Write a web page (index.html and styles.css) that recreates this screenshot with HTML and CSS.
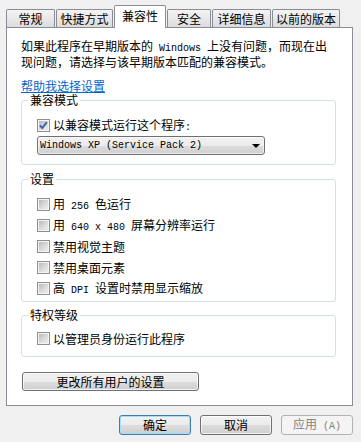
FILE: index.html
```html
<!DOCTYPE html>
<html>
<head>
  <meta charset="utf-8">
  <title>属性</title>
  <link rel="stylesheet" href="styles.css">
</head>
<body>
  <div class="dialog">
    <div class="tabs">
      <div class="tab t1">常规</div>
      <div class="tab t2">快捷方式</div>
      <div class="tab t3 active">兼容性</div>
      <div class="tab t4">安全</div>
      <div class="tab t5">详细信息</div>
      <div class="tab t6">以前的版本</div>
    </div>

    <div class="panel">
      <p class="intro">如果此程序在早期版本的<span class="mono"> Windows </span>上没有问题，而现在出<br>现问题，请选择与该早期版本匹配的兼容模式。</p>
      <a class="help" href="#">帮助我选择设置</a>

      <fieldset class="group g1">
        <legend>兼容模式</legend>
        <div class="body">
          <label class="row">
            <span class="cb checked">
              <svg width="11" height="11" viewBox="0 0 11 11"><path d="M2 5.5 L4.3 8 L8.8 2.2" fill="none" stroke="#3f62a8" stroke-width="2"/></svg>
            </span>
            <span class="text">以兼容模式运行这个程序<span class="mono">:</span></span>
          </label>
          <div class="select">
            <span class="mono">Windows XP (Service Pack 2)</span>
            <span class="arrow"></span>
          </div>
        </div>
      </fieldset>

      <fieldset class="group g2">
        <legend>设置</legend>
        <div class="body list">
          <label class="row"><span class="cb"></span><span class="text">用<span class="mono"> 256 </span>色运行</span></label>
          <label class="row"><span class="cb"></span><span class="text">用<span class="mono"> 640 x 480 </span>屏幕分辨率运行</span></label>
          <label class="row"><span class="cb"></span><span class="text">禁用视觉主题</span></label>
          <label class="row"><span class="cb"></span><span class="text">禁用桌面元素</span></label>
          <label class="row"><span class="cb"></span><span class="text">高<span class="mono"> DPI </span>设置时禁用显示缩放</span></label>
        </div>
      </fieldset>

      <fieldset class="group g3">
        <legend>特权等级</legend>
        <div class="body">
          <label class="row"><span class="cb"></span><span class="text">以管理员身份运行此程序</span></label>
        </div>
      </fieldset>

      <button class="btn all-users" type="button">更改所有用户的设置</button>
    </div>

    <div class="footer">
      <button class="btn default" type="button">确定</button>
      <button class="btn" type="button">取消</button>
      <button class="btn" type="button" disabled>应用<span class="mono"> (A)</span></button>
    </div>
  </div>
</body>
</html>
```

FILE: styles.css
```css
body {
  margin: 0;
  background: #f0f0f0;
  font-family: "Noto Sans CJK SC", sans-serif;
  font-size: 12px;
  color: #000;
}

.dialog {
  padding: 5px 8px 0 6px;
}

.mono {
  font-family: "Liberation Mono", monospace;
  font-size: 10px;
}

/* tabs */
.tabs {
  display: flex;
  align-items: flex-end;
  gap: 1px;
  height: 22px;
}

.tab {
  height: 18px;
  box-sizing: border-box;
  border: 1px solid #898c95;
  border-bottom: none;
  border-radius: 2px 2px 0 0;
  background: linear-gradient(#f4f4f4, #e8e8e8 50%, #dcdcdc);
  display: flex;
  align-items: center;
  justify-content: center;
  line-height: 12px;
}

.tab.active {
  height: 23px;
  margin-bottom: -1px;
  padding-bottom: 3px;
  background: #fff;
  position: relative;
}

.t1 { width: 49px; }
.t2 { width: 57px; }
.t3 { width: 52px; }
.t4 { width: 44px; }
.t5 { width: 59px; }
.t6 { width: 68px; }

/* page */
.panel {
  background: #fff;
  border: 1px solid #898c95;
  padding: 11px 16px 14px 14px;
}

.intro {
  margin: 0;
  line-height: 13px;
  white-space: nowrap;
}

.help {
  display: block;
  width: fit-content;
  margin-top: 11px;
  line-height: 13px;
  color: #0066cc;
  text-decoration: underline;
}

.group {
  margin: 0;
  padding: 0;
  min-width: 0;
  border: 1px solid #d5dfe5;
  border-radius: 3px;
}

.group legend {
  margin-left: 6px;
  padding: 0 2px;
  line-height: 12px;
}

.g1 { margin-top: 2px; }
.g2 { margin-top: 8px; }
.g3 { margin-top: 7px; }

.g1 .body { padding: 12px 15px 9px; }
.g2 .body { padding: 12px 15px 5px; }
.g3 .body { padding: 10px 15px 10px; }

.list {
  display: flex;
  flex-direction: column;
  gap: 6px;
}

.row {
  display: flex;
  align-items: center;
  height: 15px;
}

.row .text {
  line-height: 15px;
  white-space: nowrap;
}

.cb {
  flex: none;
  width: 13px;
  height: 13px;
  box-sizing: border-box;
  margin-right: 3px;
  border: 1px solid #8e8f8f;
  box-shadow: inset 0 0 0 1px #f4f4f4;
  background: linear-gradient(135deg, #aeb2b6, #dcdcdc 55%, #f0f0f0);
  display: flex;
  align-items: center;
  justify-content: center;
}

.cb svg {
  display: block;
}

.select {
  margin-top: 3px;
  width: 228px;
  height: 19px;
  box-sizing: border-box;
  border: 1px solid #707070;
  border-radius: 3px;
  background: linear-gradient(#f2f2f2, #ebebeb 50%, #dddddd 51%, #cfcfcf);
  box-shadow: inset 0 0 0 1px rgba(255, 255, 255, 0.6);
  display: flex;
  align-items: center;
  padding: 0 4px 0 2px;
}

.arrow {
  margin-left: auto;
  width: 0;
  height: 0;
  border-left: 4px solid transparent;
  border-right: 4px solid transparent;
  border-top: 4px solid #000;
}

/* buttons */
.btn {
  height: 19px;
  box-sizing: border-box;
  padding: 0;
  border: 1px solid #707070;
  border-radius: 3px;
  background: linear-gradient(#f2f2f2, #ebebeb 50%, #dddddd 51%, #cfcfcf);
  box-shadow: inset 0 0 0 1px rgba(255, 255, 255, 0.7);
  font: inherit;
  line-height: 12px;
  color: #000;
}

.all-users {
  display: block;
  width: 177px;
  margin-top: 15px;
  margin-left: 1px;
}

.footer {
  display: flex;
  justify-content: flex-end;
  gap: 9px;
  margin-top: 9px;
}

.footer .btn {
  width: 72px;
  height: 20px;
}

.btn.default {
  border-color: #3c7fb1;
  box-shadow: inset 0 0 0 1px #a9dcf6;
}

.btn:disabled {
  border-color: #adb2b5;
  background: #f4f4f4;
  box-shadow: none;
  color: #838383;
}
```
